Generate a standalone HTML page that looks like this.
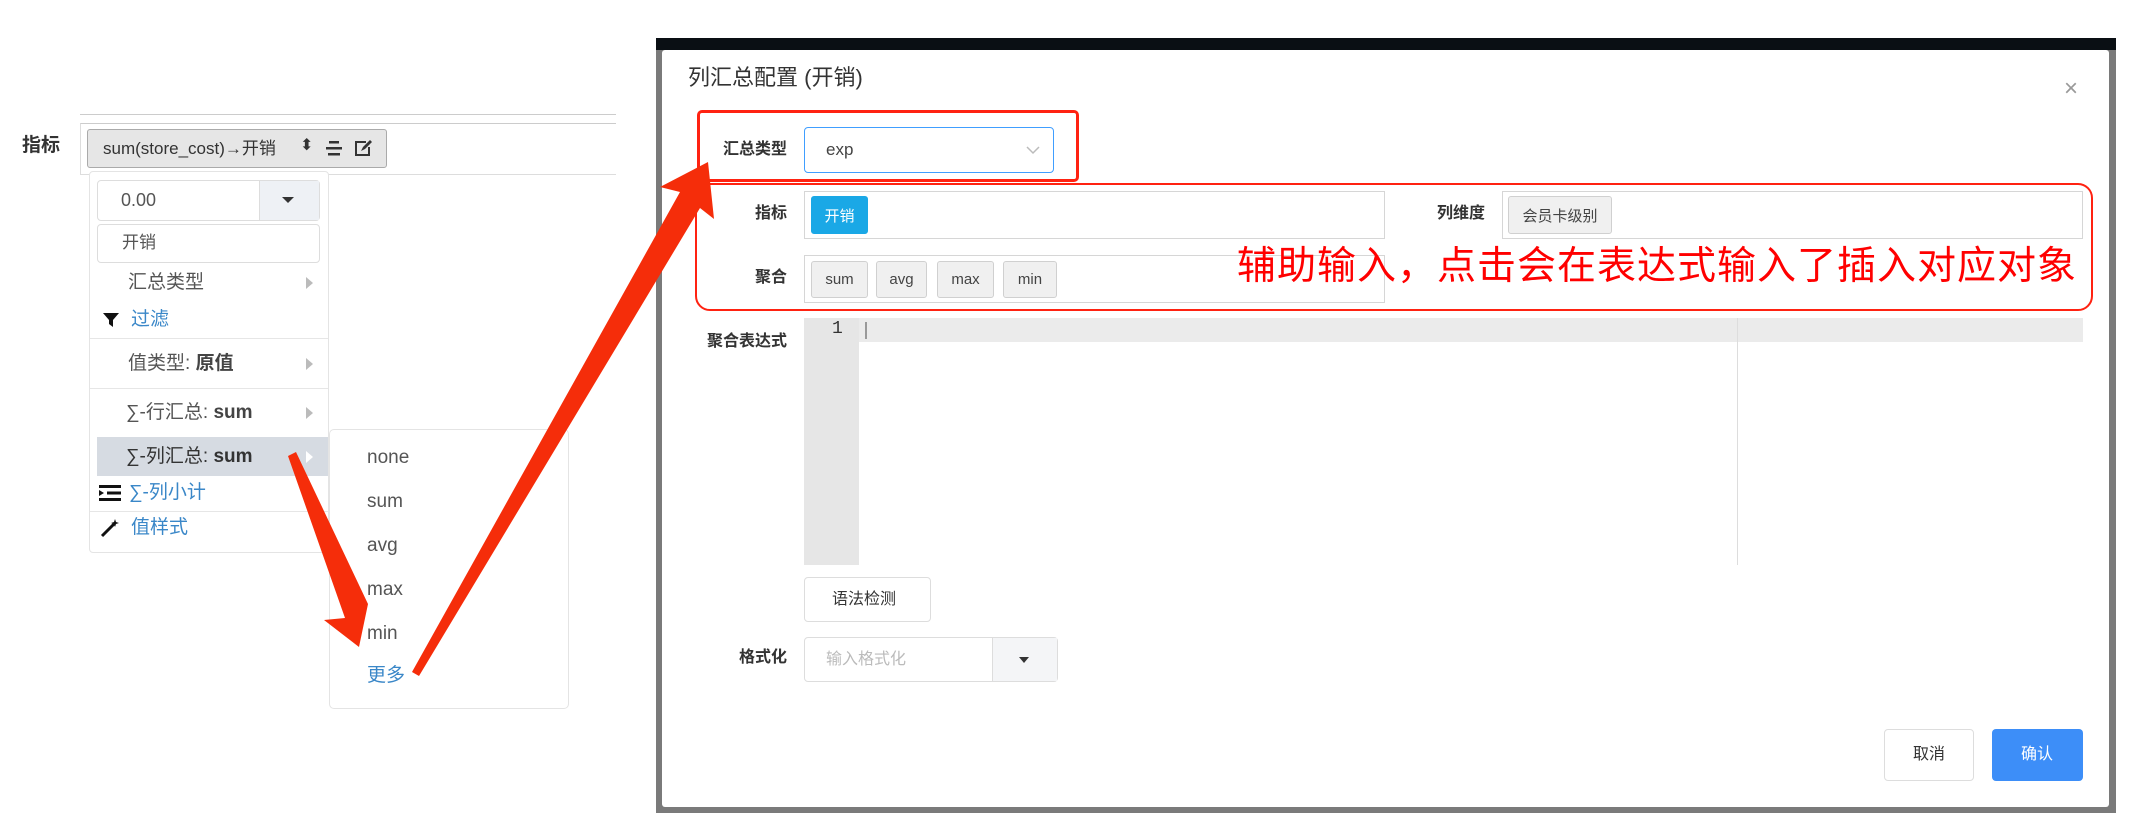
<!DOCTYPE html>
<html><head><meta charset="utf-8"><style>
*{box-sizing:border-box;margin:0;padding:0}
body{width:2136px;height:838px;background:#fff;position:relative;overflow:hidden;font-family:"Liberation Sans","Noto Sans CJK SC",sans-serif;color:#333}
.a{position:absolute}
.t{position:absolute;white-space:nowrap;line-height:1}
.mi{font-size:19px;color:#555}
.blue{color:#3a87c8}
.tri{position:absolute;width:0;height:0;border-top:6px solid transparent;border-bottom:6px solid transparent;border-left:7px solid #bbb}
.lab{position:absolute;font-size:16px;font-weight:bold;color:#333;text-align:right;width:120px;line-height:1}
.box{position:absolute;border:1px solid #d6d6d6;background:#fff}
.tag{position:absolute;border:1px solid #d0d0d0;background:#f0f0f0;border-radius:3px;font-size:15px;color:#444;display:flex;align-items:center;justify-content:center}
</style></head><body>
<!-- left panel -->
<div class="a" style="left:80px;top:114px;width:536px;height:1px;background:#ccc"></div>
<div class="a" style="left:80px;top:123px;width:536px;height:52px;border-top:1px solid #ccc;border-bottom:1px solid #ddd;border-left:1px solid #ddd"></div>
<div class="t" style="left:22px;top:136px;font-size:19px;font-weight:bold;color:#333">指标</div>
<div class="a" style="left:87px;top:129px;width:300px;height:39px;background:#e6e6e6;border:1px solid #aaa;border-radius:3px"></div>
<div class="t" style="left:103px;top:140px;font-size:17px;color:#333">sum(store_cost)→开销</div>
<div class="t" style="left:300px;top:138px;font-size:16px;color:#333">⬍</div>
<svg class="a" style="left:324px;top:140px" width="20" height="18"><rect x="5" y="1" width="10" height="2.5" fill="#333"/><rect x="2" y="7" width="16" height="2.5" fill="#333"/><rect x="4" y="13" width="12" height="2.5" fill="#333"/></svg>
<svg class="a" style="left:353px;top:138px" width="20" height="20"><path d="M13 4H3v13h13V9" fill="none" stroke="#333" stroke-width="2"/><path d="M8 13l2-4 7-7 2 2-7 7z" fill="#333"/></svg>

<div class="a" style="left:89px;top:171px;width:240px;height:382px;border:1px solid #e4e4e4;border-radius:4px;background:#fff"></div>
<div class="a" style="left:97px;top:180px;width:223px;height:41px;border:1px solid #ddd;border-radius:4px;background:#fff"></div>
<div class="a" style="left:259px;top:181px;width:60px;height:39px;background:#eef1f5;border-left:1px solid #ddd"></div>
<div class="a" style="left:282px;top:197px;width:0;height:0;border-left:6px solid transparent;border-right:6px solid transparent;border-top:6px solid #333"></div>
<div class="t" style="left:121px;top:191px;font-size:18px;color:#555">0.00</div>
<div class="a" style="left:97px;top:224px;width:223px;height:39px;border:1px solid #ddd;border-radius:4px"></div>
<div class="t" style="left:122px;top:234px;font-size:17px;color:#555">开销</div>
<div class="t mi" style="left:128px;top:273px">汇总类型</div><div class="tri" style="left:306px;top:277px"></div>
<svg class="a" style="left:102px;top:312px" width="18" height="16"><path d="M1 1h16l-6 7v7l-4-3V8z" fill="#111"/></svg>
<div class="t mi blue" style="left:131px;top:310px">过滤</div>
<div class="a" style="left:90px;top:338px;width:238px;height:1px;background:#e6e6e6"></div>
<div class="t mi" style="left:128px;top:354px">值类型: <b style="color:#444">原值</b></div><div class="tri" style="left:306px;top:358px"></div>
<div class="a" style="left:90px;top:388px;width:238px;height:1px;background:#e6e6e6"></div>
<div class="t mi" style="left:126px;top:403px">∑-行汇总: <b style="color:#444">sum</b></div><div class="tri" style="left:306px;top:407px"></div>
<div class="a" style="left:97px;top:437px;width:231px;height:39px;background:#d6dbe2"></div>
<div class="t mi" style="left:126px;top:447px;color:#333">∑-列汇总: <b>sum</b></div><div class="tri" style="left:306px;top:451px;border-left-color:#fff"></div>
<svg class="a" style="left:99px;top:485px" width="22" height="16"><rect x="0" y="0" width="22" height="3" fill="#111"/><rect x="8" y="6.5" width="14" height="3" fill="#111"/><rect x="0" y="13" width="22" height="3" fill="#111"/><path d="M0 5l5 3-5 3z" fill="#111"/></svg>
<div class="t mi blue" style="left:129px;top:483px">∑-列小计</div>
<div class="a" style="left:90px;top:511px;width:238px;height:1px;background:#e6e6e6"></div>
<svg class="a" style="left:100px;top:518px" width="20" height="20"><path d="M2 18L14 6" stroke="#111" stroke-width="3"/><path d="M15 1l1 3 3 1-3 1-1 3-1-3-3-1 3-1z" fill="#111"/></svg>
<div class="t mi blue" style="left:131px;top:518px">值样式</div>

<div class="a" style="left:329px;top:429px;width:240px;height:280px;border:1px solid #e4e4e4;border-radius:5px;background:#fff"></div>
<div class="t mi" style="left:367px;top:448px">none</div>
<div class="t mi" style="left:367px;top:492px">sum</div>
<div class="t mi" style="left:367px;top:536px">avg</div>
<div class="t mi" style="left:367px;top:580px">max</div>
<div class="t mi" style="left:367px;top:624px">min</div>
<div class="t mi blue" style="left:367px;top:666px">更多</div>

<!-- dialog -->
<div class="a" style="left:656px;top:38px;width:1460px;height:775px;background:#7a7a7a"></div>
<div class="a" style="left:656px;top:38px;width:1460px;height:12px;background:#0a0f14"></div>
<div class="a" style="left:662px;top:50px;width:1447px;height:757px;background:#fff;border-radius:3px"></div>
<div class="t" style="left:688px;top:67px;font-size:22px;color:#333">列汇总配置 (开销)</div>
<div class="t" style="left:2064px;top:77px;font-size:24px;color:#999">×</div>

<div class="lab" style="left:667px;top:142px">汇总类型</div>
<div class="a" style="left:804px;top:127px;width:250px;height:46px;border:1px solid #409eff;border-radius:4px"></div>
<div class="t" style="left:826px;top:141px;font-size:17px;color:#444">exp</div>
<svg class="a" style="left:1026px;top:145px" width="14" height="10"><path d="M1 2l6 6 6-6" fill="none" stroke="#bbb" stroke-width="1.5"/></svg>

<div class="lab" style="left:667px;top:206px">指标</div>
<div class="box" style="left:804px;top:191px;width:581px;height:48px"></div>
<div class="tag" style="left:811px;top:196px;width:57px;height:38px;background:#1aa8e6;border-color:#1aa8e6;color:#fff">开销</div>
<div class="lab" style="left:1365px;top:206px">列维度</div>
<div class="box" style="left:1502px;top:191px;width:581px;height:48px"></div>
<div class="tag" style="left:1508px;top:196px;width:104px;height:38px">会员卡级别</div>

<div class="lab" style="left:667px;top:270px">聚合</div>
<div class="box" style="left:804px;top:255px;width:581px;height:48px"></div>
<div class="tag" style="left:811px;top:261px;width:57px;height:37px">sum</div>
<div class="tag" style="left:876px;top:261px;width:51px;height:37px">avg</div>
<div class="tag" style="left:937px;top:261px;width:57px;height:37px">max</div>
<div class="tag" style="left:1003px;top:261px;width:54px;height:37px">min</div>

<div class="lab" style="left:667px;top:334px">聚合表达式</div>
<div class="a" style="left:804px;top:318px;width:55px;height:247px;background:#e6e6e6"></div>
<div class="a" style="left:859px;top:318px;width:1224px;height:24px;background:#ebebeb"></div>
<div class="a" style="left:1737px;top:318px;width:1px;height:247px;background:#ddd"></div>
<div class="t" style="left:832px;top:320px;font-size:18px;color:#333;font-family:'Liberation Mono',monospace">1</div>
<div class="a" style="left:865px;top:322px;width:2px;height:17px;background:#999"></div>

<div class="a" style="left:804px;top:577px;width:127px;height:45px;border:1px solid #ddd;border-radius:4px"></div>
<div class="t" style="left:832px;top:592px;font-size:16px;color:#333">语法检测</div>

<div class="lab" style="left:667px;top:650px">格式化</div>
<div class="a" style="left:804px;top:637px;width:254px;height:45px;border:1px solid #ddd;border-radius:4px"></div>
<div class="a" style="left:992px;top:638px;width:65px;height:43px;background:#f4f5f7;border-left:1px solid #ddd"></div>
<div class="a" style="left:1019px;top:657px;width:0;height:0;border-left:5px solid transparent;border-right:5px solid transparent;border-top:6px solid #333"></div>
<div class="t" style="left:826px;top:652px;font-size:16px;color:#bbb">输入格式化</div>

<div class="a" style="left:1884px;top:729px;width:90px;height:52px;border:1px solid #ddd;border-radius:4px"></div>
<div class="t" style="left:1913px;top:747px;font-size:16px;color:#333">取消</div>
<div class="a" style="left:1992px;top:729px;width:91px;height:52px;background:#3d8ef8;border-radius:4px"></div>
<div class="t" style="left:2021px;top:747px;font-size:16px;color:#fff">确认</div>

<!-- annotations -->
<div class="a" style="left:697px;top:110px;width:382px;height:72px;border:3px solid #f21;border-radius:5px"></div>
<div class="a" style="left:695px;top:183px;width:1398px;height:128px;border:2px solid #f21;border-radius:15px"></div>
<div class="t" style="left:1237px;top:247px;font-size:39px;color:#f00;letter-spacing:1px">辅助输入，点击会在表达式输入了插入对应对象</div>
<svg class="a" style="left:0;top:0" width="2136" height="838">
<path d="M412 672 L419 676 L700 208 L714 219 L708 162 L660 187 L680 192 Z" fill="#f52d0a"/>
<path d="M288 456 L296 452 L368 604 L359 647 L324 620 L345 618 Z" fill="#f52d0a"/>
</svg>
</body></html>
